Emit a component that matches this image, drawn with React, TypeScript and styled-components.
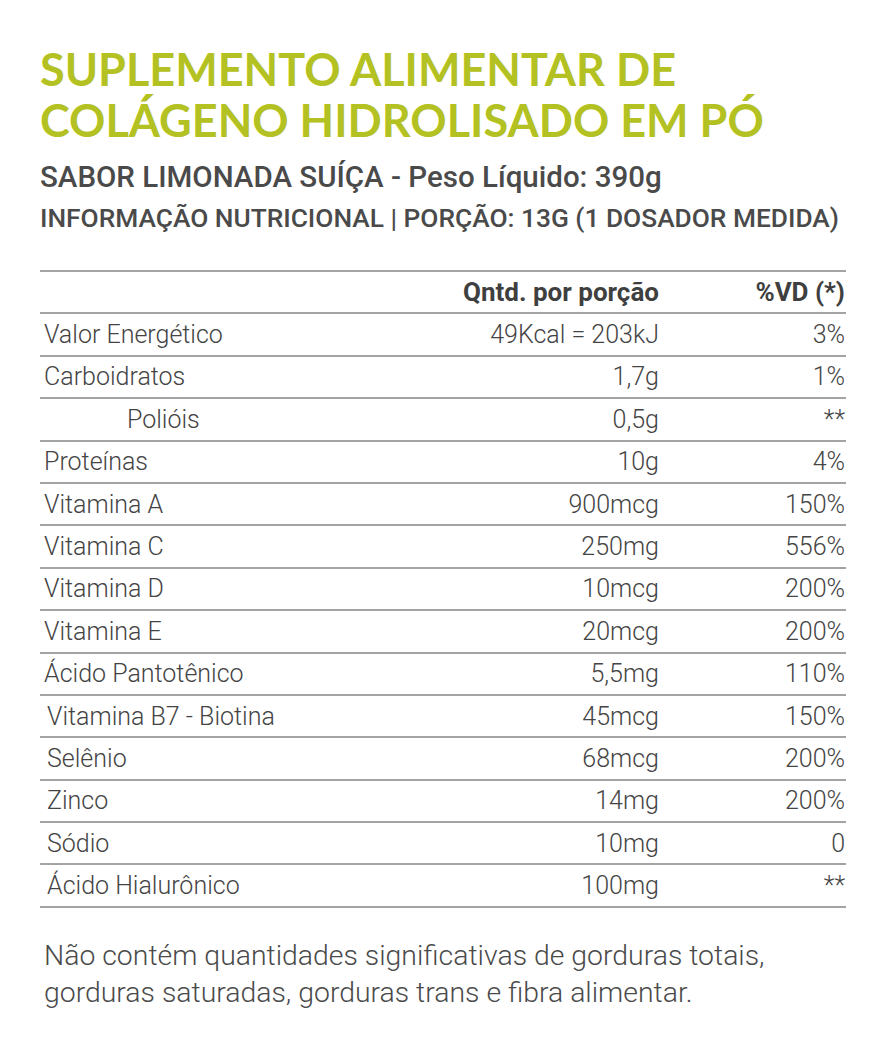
import React from 'react';
import styled, { createGlobalStyle } from 'styled-components';

const GlobalStyle = createGlobalStyle`
  html, body {
    margin: 0;
    padding: 0;
    background: #ffffff;
  }
`;

const Page = styled.main`
  width: 888px;
  box-sizing: border-box;
  padding: 44px 42px 0 40px;
  font-family: Roboto, 'Liberation Sans', sans-serif;
  color: #474747;
`;

const Title = styled.h1`
  margin: 0;
  font-family: Lato, 'Liberation Sans', sans-serif;
  font-weight: 700;
  font-size: 45px;
  line-height: 51px;
  color: #b3c122;
`;

const Subtitle = styled.h2`
  margin: 12px 0 0;
  font-weight: 500;
  font-size: 29.5px;
  line-height: 38px;
  color: #4a4a4a;
`;

const Serving = styled.h3`
  margin: 5px 0 0;
  font-weight: 500;
  font-size: 26.3px;
  line-height: 34px;
  color: #4a4a4a;
`;

const Table = styled.div`
  margin-top: 35px;
  border-top: 2px solid #a3a3a3;
`;

const Row = styled.div<{ $head?: boolean }>`
  display: grid;
  grid-template-columns: 1fr 260px 187px;
  align-items: center;
  height: 40.4px;
  border-bottom: 2px solid #a3a3a3;
  font-size: ${({ $head }) => ($head ? '26px' : '25px')};
  font-weight: ${({ $head }) => ($head ? 700 : 300)};
  color: ${({ $head }) => ($head ? '#3f3f3f' : '#444444')};
`;

const Name = styled.span<{ $indent?: number }>`
  padding-left: ${({ $indent }) => 4 + ($indent ?? 0)}px;
  white-space: nowrap;
`;

const Qty = styled.span`
  text-align: right;
  white-space: nowrap;
`;

const Vd = styled.span`
  text-align: right;
  padding-right: 1px;
  white-space: nowrap;
`;

const Note = styled.p`
  margin: 29px 0 0 4px;
  font-size: 28.4px;
  font-weight: 300;
  line-height: 37px;
  color: #4a4a4a;
`;

type Nutrient = { name: string; qty: string; vd: string; indent?: number };

const nutrients: Nutrient[] = [
  { name: 'Valor Energético', qty: '49Kcal = 203kJ', vd: '3%' },
  { name: 'Carboidratos', qty: '1,7g', vd: '1%' },
  { name: 'Polióis', qty: '0,5g', vd: '**', indent: 83 },
  { name: 'Proteínas', qty: '10g', vd: '4%' },
  { name: 'Vitamina A', qty: '900mcg', vd: '150%' },
  { name: 'Vitamina C', qty: '250mg', vd: '556%' },
  { name: 'Vitamina D', qty: '10mcg', vd: '200%' },
  { name: 'Vitamina E', qty: '20mcg', vd: '200%' },
  { name: 'Ácido Pantotênico', qty: '5,5mg', vd: '110%' },
  { name: 'Vitamina B7 - Biotina', qty: '45mcg', vd: '150%', indent: 3 },
  { name: 'Selênio', qty: '68mcg', vd: '200%', indent: 3 },
  { name: 'Zinco', qty: '14mg', vd: '200%', indent: 3 },
  { name: 'Sódio', qty: '10mg', vd: '0', indent: 3 },
  { name: 'Ácido Hialurônico', qty: '100mg', vd: '**', indent: 3 },
];

const App: React.FC = () => {
  return (
    <>
      <GlobalStyle />
      <Page>
        <Title>
          SUPLEMENTO ALIMENTAR DE
          <br />
          COLÁGENO HIDROLISADO EM PÓ
        </Title>
        <Subtitle>SABOR LIMONADA SUÍÇA - Peso Líquido: 390g</Subtitle>
        <Serving>INFORMAÇÃO NUTRICIONAL | PORÇÃO: 13G (1 DOSADOR MEDIDA)</Serving>

        <Table>
          <Row $head>
            <Name />
            <Qty>Qntd. por porção</Qty>
            <Vd>%VD (*)</Vd>
          </Row>
          {nutrients.map((n) => (
            <Row key={n.name}>
              <Name $indent={n.indent}>{n.name}</Name>
              <Qty>{n.qty}</Qty>
              <Vd>{n.vd}</Vd>
            </Row>
          ))}
        </Table>

        <Note>
          Não contém quantidades significativas de gorduras totais,
          <br />
          gorduras saturadas, gorduras trans e fibra alimentar.
        </Note>
      </Page>
    </>
  );
};

export default App;
